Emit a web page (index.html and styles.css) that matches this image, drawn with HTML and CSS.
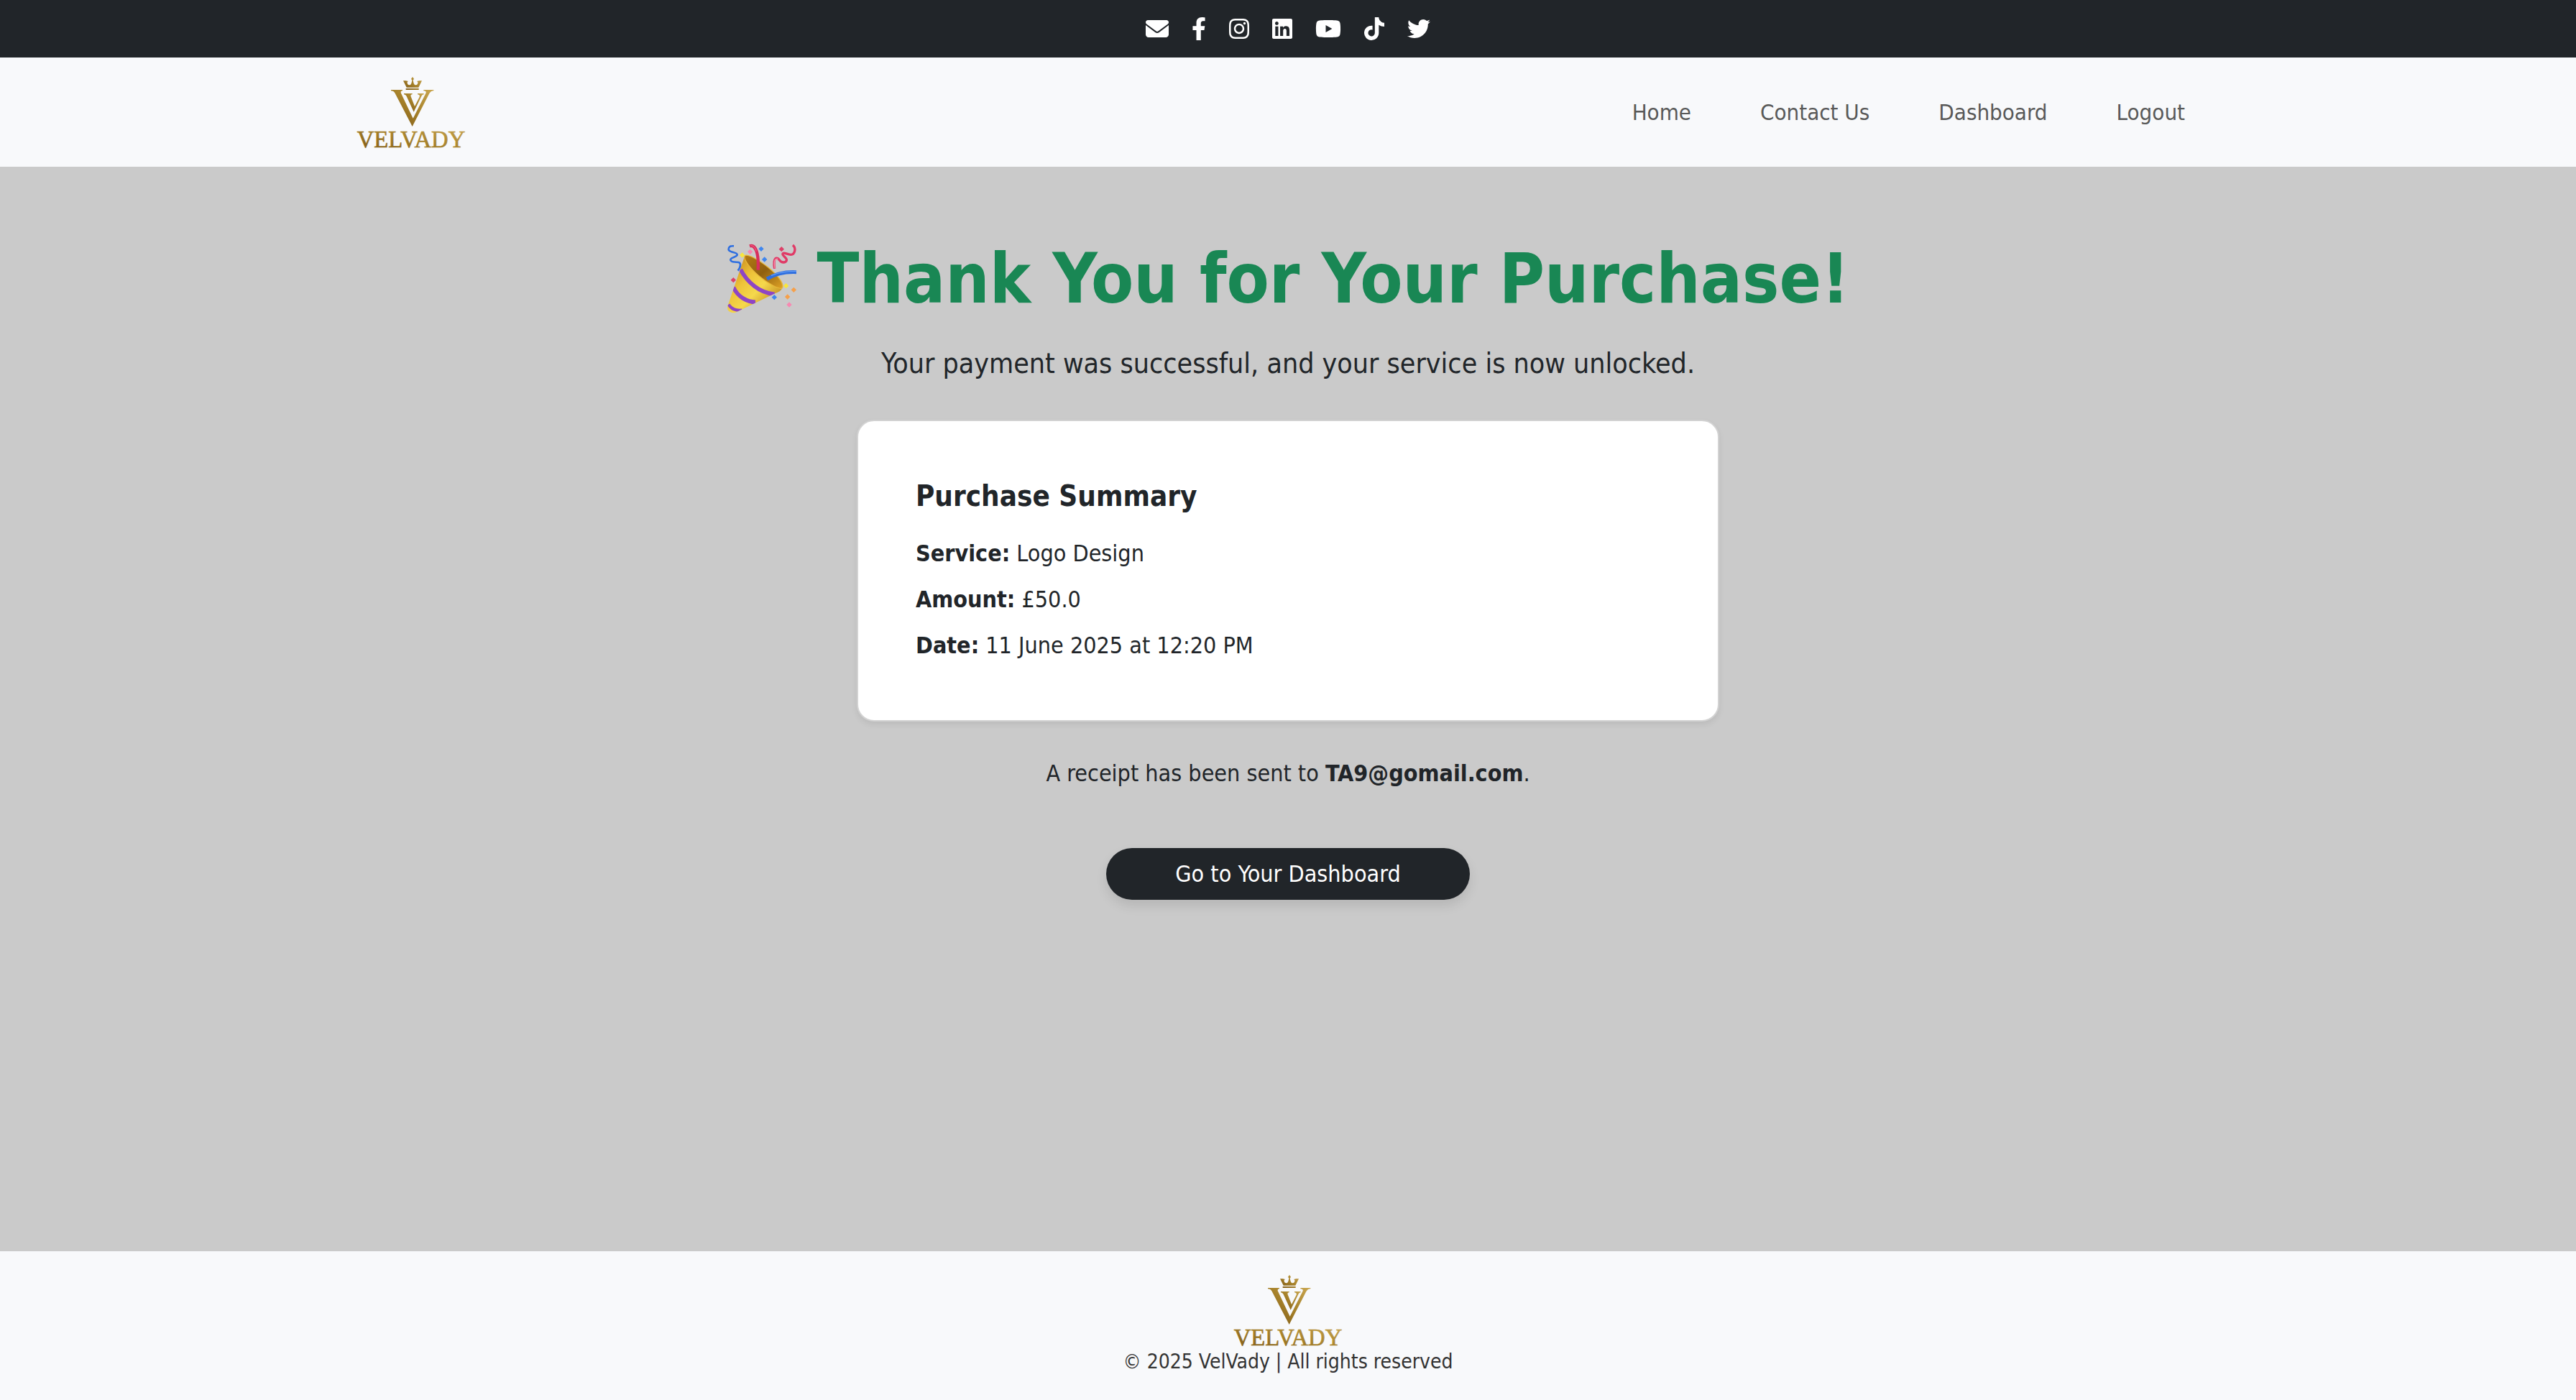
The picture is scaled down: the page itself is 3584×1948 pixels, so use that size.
FILE: index.html
```html
<!DOCTYPE html>
<html lang="en">
<head>
<meta charset="utf-8">
<meta name="viewport" content="width=device-width, initial-scale=1">
<title>VelVady | Thank You</title>
<link rel="stylesheet" href="styles.css">
</head>
<body>
<svg class="defs" aria-hidden="true">
  <defs>
    <linearGradient id="gold" x1="0" y1="1" x2="1" y2="0">
      <stop offset="0" stop-color="#7a5615"/>
      <stop offset="0.5" stop-color="#a58029"/>
      <stop offset="1" stop-color="#c9a650"/>
    </linearGradient>
    <symbol id="logo" viewBox="48 48 456 300">
      <path fill="url(#gold)" d="M282 51l6 8-4 6 2 9q2 11 10 11 9-1 8-13l-4-3 10-2h11l-14 28h-50l-14-28h11l10 2-4 3q-1 12 8 13 8 0 10-11l2-9-4-6zM254 99h54v6h-54z"/>
      <path fill="url(#gold)" d="M192 105h48v4q-10 1-6 10l50 105 53-104q5-10-9-11v-4h42v4q-12 1-18 11l-71 138-73-140q-5-9-16-9z"/>
      <path fill="url(#gold)" d="M246 120h35v4q-9 1-6 9l16 41 20-40q3-8-8-10v-4h26v4q-7 1-10 8l-32 65-30-65q-4-8-11-8z"/>
      <text class="logo-word" x="276" y="345" text-anchor="middle" fill="url(#gold)" stroke="url(#gold)">VELVADY</text>
    </symbol>
  </defs>
</svg>

<div class="topbar">
  <a href="#" aria-label="Email"><svg class="icon" viewBox="0 0 512 512"><path d="M48 64C21.5 64 0 85.5 0 112c0 15.1 7.1 29.3 19.2 38.4L236.8 313.6c11.4 8.5 27 8.5 38.4 0L492.8 150.4c12.1-9.1 19.2-23.3 19.2-38.4c0-26.5-21.5-48-48-48H48zM0 176V384c0 35.3 28.7 64 64 64H448c35.3 0 64-28.7 64-64V176L294.4 339.2c-22.8 17.1-54 17.1-76.8 0L0 176z"/></svg></a>
  <a href="#" aria-label="Facebook"><svg class="icon" viewBox="0 0 320 512"><path d="M279.14 288l14.22-92.66h-88.91v-60.13c0-25.35 12.42-50.06 52.24-50.06h40.42V6.26S260.43 0 225.36 0c-73.22 0-121.08 44.38-121.08 124.72v70.62H22.89V288h81.39v224h100.17V288z"/></svg></a>
  <a href="#" aria-label="Instagram"><svg class="icon" viewBox="0 0 448 512"><path d="M224.1 141c-63.6 0-114.9 51.3-114.9 114.9s51.3 114.9 114.9 114.9S339 319.5 339 255.9 287.7 141 224.1 141zm0 189.6c-41.1 0-74.7-33.5-74.7-74.7s33.5-74.7 74.7-74.7 74.7 33.5 74.7 74.7-33.6 74.7-74.7 74.7zm146.4-194.3c0 14.9-12 26.8-26.8 26.8-14.9 0-26.8-12-26.8-26.8s12-26.8 26.8-26.8 26.8 12 26.8 26.8zm76.1 27.2c-1.7-35.9-9.9-67.7-36.2-93.9-26.2-26.2-58-34.4-93.9-36.2-37-2.1-147.9-2.1-184.9 0-35.8 1.7-67.6 9.9-93.9 36.1s-34.4 58-36.2 93.9c-2.1 37-2.1 147.9 0 184.9 1.7 35.9 9.9 67.7 36.2 93.9s58 34.4 93.9 36.2c37 2.1 147.9 2.1 184.9 0 35.9-1.7 67.7-9.9 93.9-36.2 26.2-26.2 34.4-58 36.2-93.9 2.1-37 2.1-147.8 0-184.8zM398.8 388c-7.8 19.6-22.9 34.7-42.6 42.6-29.5 11.7-99.5 9-132.1 9s-102.7 2.6-132.1-9c-19.6-7.8-34.7-22.9-42.6-42.6-11.7-29.5-9-99.5-9-132.1s-2.6-102.7 9-132.1c7.8-19.6 22.9-34.7 42.6-42.6 29.5-11.7 99.5-9 132.1-9s102.7-2.6 132.1 9c19.6 7.8 34.7 22.9 42.6 42.6 11.7 29.5 9 99.5 9 132.1s2.7 102.7-9 132.1z"/></svg></a>
  <a href="#" aria-label="LinkedIn"><svg class="icon" viewBox="0 0 448 512"><path d="M416 32H31.9C14.3 32 0 46.5 0 64.3v383.4C0 465.5 14.3 480 31.9 480H416c17.6 0 32-14.5 32-32.3V64.3c0-17.8-14.4-32.3-32-32.3zM135.4 416H69V202.2h66.5V416zm-33.2-243c-21.3 0-38.5-17.3-38.5-38.5S80.9 96 102.2 96c21.2 0 38.5 17.3 38.5 38.5 0 21.3-17.2 38.5-38.5 38.5zm282.1 243h-66.4V312c0-24.8-.5-56.7-34.5-56.7-34.6 0-39.9 27-39.9 54.9V416h-66.4V202.2h63.7v29.2h.9c8.9-16.8 30.6-34.5 62.9-34.5 67.2 0 79.7 44.3 79.7 101.9V416z"/></svg></a>
  <a href="#" aria-label="YouTube"><svg class="icon" viewBox="0 0 576 512"><path d="M549.655 124.083c-6.281-23.65-24.787-42.276-48.284-48.597C458.781 64 288 64 288 64S117.22 64 74.629 75.486c-23.497 6.322-42.003 24.947-48.284 48.597-11.412 42.867-11.412 132.305-11.412 132.305s0 89.438 11.412 132.305c6.281 23.65 24.787 41.5 48.284 47.821C117.22 448 288 448 288 448s170.78 0 213.371-11.486c23.497-6.321 42.003-24.171 48.284-47.821 11.412-42.867 11.412-132.305 11.412-132.305s0-89.438-11.412-132.305zm-317.51 213.508V175.185l142.739 81.205-142.739 81.201z"/></svg></a>
  <a href="#" aria-label="TikTok"><svg class="icon" viewBox="0 0 448 512"><path d="M448,209.91a210.06,210.06,0,0,1-122.77-39.25V349.38A162.55,162.55,0,1,1,185,188.31V278.2a74.62,74.62,0,1,0,52.23,71.18V0l88,0a121.18,121.18,0,0,0,1.86,22.17h0A122.18,122.18,0,0,0,381,102.39a121.43,121.43,0,0,0,67,20.14Z"/></svg></a>
  <a href="#" aria-label="Twitter"><svg class="icon" viewBox="0 0 512 512"><path d="M459.37 151.716c.325 4.548.325 9.097.325 13.645 0 138.72-105.583 298.558-298.558 298.558-59.452 0-114.68-17.219-161.137-47.106 8.447.974 16.568 1.299 25.34 1.299 49.055 0 94.213-16.568 130.274-44.832-46.132-.975-84.792-31.188-98.112-72.772 6.498.974 12.995 1.624 19.818 1.624 9.421 0 18.843-1.3 27.614-3.573-48.081-9.747-84.143-51.98-84.143-102.985v-1.299c13.969 7.797 30.214 12.67 47.431 13.319-28.264-18.843-46.781-51.005-46.781-87.391 0-19.492 5.197-37.36 14.294-52.954 51.655 63.675 129.3 105.258 216.365 109.807-1.624-7.797-2.599-15.918-2.599-24.04 0-57.828 46.782-104.934 104.934-104.934 30.213 0 57.502 12.67 76.67 33.137 23.715-4.548 46.456-13.32 66.599-25.34-7.798 24.366-24.366 44.833-46.132 57.827 21.117-2.273 41.584-8.122 60.426-16.243-14.292 20.791-32.161 39.308-52.628 54.253z"/></svg></a>
</div>

<header class="navbar">
  <div class="container">
    <a href="#" aria-label="VelVady home"><svg class="logo"><use href="#logo"/></svg></a>
    <nav class="nav-links">
      <a href="#">Home</a>
      <a href="#">Contact Us</a>
      <a href="#">Dashboard</a>
      <a href="#">Logout</a>
    </nav>
  </div>
</header>

<main class="content">
  <h1 class="title">
    <svg class="party" viewBox="36 56 294 294" role="img" aria-label="Party popper">
      <defs>
        <linearGradient id="cone" x1="0" y1="0.2" x2="0.8" y2="1">
          <stop offset="0" stop-color="#c98a1c"/>
          <stop offset="0.35" stop-color="#eec43a"/>
          <stop offset="0.6" stop-color="#f5d84c"/>
          <stop offset="1" stop-color="#b97c18"/>
        </linearGradient>
        <linearGradient id="mouth" x1="0" y1="0" x2="1" y2="1">
          <stop offset="0" stop-color="#b57a14"/>
          <stop offset="0.5" stop-color="#8f6010"/>
          <stop offset="1" stop-color="#e0a325"/>
        </linearGradient>
        <clipPath id="cone-clip"><path d="M112 106Q128 148 174 184T268 242Q262 256 238 264L72 344Q56 348 43 336 37 328 41 314z"/></clipPath>
      </defs>
      <path fill="url(#cone)" d="M112 106Q128 148 174 184T268 242Q262 256 238 264L72 344Q56 348 43 336 37 328 41 314z"/>
      <g clip-path="url(#cone-clip)" fill="none" stroke="#8e45c6" stroke-width="17">
        <path d="M94 164Q116 206 152 234T236 268"/>
        <path d="M64 238Q78 268 104 284T156 300"/>
        <path d="M44 310Q52 324 66 330T100 334" stroke-width="13"/>
      </g>
      <path fill="url(#mouth)" stroke="#e9b93a" stroke-width="4" d="M112 106C124 98 168 122 210 156S276 224 269 240C260 252 208 222 170 190S104 120 112 106z"/>
      <g fill="none">
        <path stroke="#d92e5c" stroke-width="13" d="M132 66Q150 60 160 86T167 166"/>
        <path stroke="#f4668a" stroke-width="3" d="M136 64Q152 62 160 88"/>
        <path stroke="#2f6fe0" stroke-width="15" d="M204 203Q256 172 327 175"/>
        <path stroke="#68a0f5" stroke-width="4" d="M222 189Q268 170 327 171"/>
        <path stroke="#2f6fe0" stroke-width="8" d="M66 66Q44 64 44 80C44 94 80 90 80 102S50 112 52 124 78 132 86 134 98 150 83 169"/>
        <path stroke="#e03a66" stroke-width="10" d="M312 62C328 76 320 102 304 102 288 102 274 90 270 98S290 116 286 126 266 138 256 124 228 112 236 160"/>
        <path stroke="#f58ba8" stroke-width="4" d="M237 158Q230 116 250 120"/>
      </g>
      <path fill="#3f86ee" d="M180 67l11 11-11 11-11-11zM194 111l11 11-11 11-11-11zM235 269l11 11-11 11-11-11z"/>
      <path fill="#f889b2" d="M134 79l11 11-11 11-11-11zM297 300l11 11-11 11-11-11z"/>
      <path fill="#f8e63c" d="M101 93l11 11-11 11-11-11zM284 221l11 11-11 11-11-11z"/>
      <path fill="#dd4068" d="M265 68l11 11-11 11-11-11zM64 197l11 11-11 11-11-11z"/>
      <path fill="#f6a04a" d="M316 238l11 11-11 11-11-11zM290 267l11 11-11 11-11-11z"/>
    </svg>
    <span>Thank You for Your Purchase!</span>
  </h1>
  <p class="lead">Your payment was successful, and your service is now unlocked.</p>

  <section class="card">
    <h2 class="card-title">Purchase Summary</h2>
    <p><strong>Service:</strong> Logo Design</p>
    <p><strong>Amount:</strong> £50.0</p>
    <p><strong>Date:</strong> 11 June 2025 at 12:20 PM</p>
  </section>

  <p class="receipt">A receipt has been sent to <strong>TA9@gomail.com</strong>.</p>
  <a class="button" href="#">Go to Your Dashboard</a>
</main>

<footer class="footer">
  <svg class="logo" role="img" aria-label="VelVady"><use href="#logo"/></svg>
  <p class="copyright">© 2025 VelVady | All rights reserved</p>
</footer>
</body>
</html>
```
FILE: styles.css
```css
* {
  box-sizing: border-box;
}

body {
  display: flex;
  flex-direction: column;
  min-height: 100vh;
  margin: 0;
  background: #cacaca;
  color: #212529;
  font-family: Tahoma, "DejaVu Sans Condensed", "DejaVu Sans", sans-serif;
  font-size: 32px;
  line-height: 48px;
}

h1, h2, p {
  margin: 0;
}

a {
  text-decoration: none;
}

.defs {
  position: absolute;
  width: 0;
  height: 0;
}

.topbar {
  display: flex;
  justify-content: center;
  gap: 32px;
  padding: 24px;
  background: #212529;
}

.topbar a {
  display: flex;
}

.icon {
  height: 32px;
  fill: #fff;
}

.navbar {
  padding: 26px 0;
  background: #f8f9fb;
}

.container {
  display: flex;
  align-items: center;
  justify-content: space-between;
  max-width: 2640px;
  margin: 0 auto;
  padding: 0 24px;
}

.logo {
  display: block;
  width: 152px;
  height: 100px;
}

.logo-word {
  font-family: "Liberation Serif", serif;
  font-size: 98px;
  stroke-width: 2px;
}

.nav-links {
  display: flex;
}

.nav-links a {
  padding: 0 48px;
  color: #595959;
  font-size: 31px;
}

.content {
  display: flex;
  flex: 1;
  flex-direction: column;
  align-items: center;
  padding: 98px 24px;
}

.title {
  display: flex;
  align-items: center;
  gap: 28px;
  margin-bottom: 30px;
  color: #198754;
  font-size: 96px;
  line-height: 116px;
}

.party {
  width: 98px;
  height: 98px;
}

.lead {
  margin-bottom: 48px;
  font-size: 39px;
  line-height: 60px;
}

.card {
  display: flex;
  flex-direction: column;
  gap: 16px;
  width: 100%;
  max-width: 1200px;
  margin-bottom: 48px;
  padding: 80px;
  border: 2px solid #d2d2d2;
  border-radius: 24px;
  background: #fff;
  box-shadow: 0 4px 8px rgba(0, 0, 0, 0.075);
}

.card-title {
  margin-bottom: 16px;
  font-size: 40px;
  line-height: 48px;
}

.receipt {
  margin-bottom: 80px;
}

.button {
  padding: 12px 96px;
  border-radius: 36px;
  background: #212529;
  box-shadow: 0 8px 16px rgba(0, 0, 0, 0.1);
  color: #fff;
}

.footer {
  display: flex;
  flex-direction: column;
  align-items: center;
  padding: 32px 24px;
  background: #f8f9fb;
}

.copyright {
  color: #333;
  font-size: 28px;
  line-height: 43px;
}
```
